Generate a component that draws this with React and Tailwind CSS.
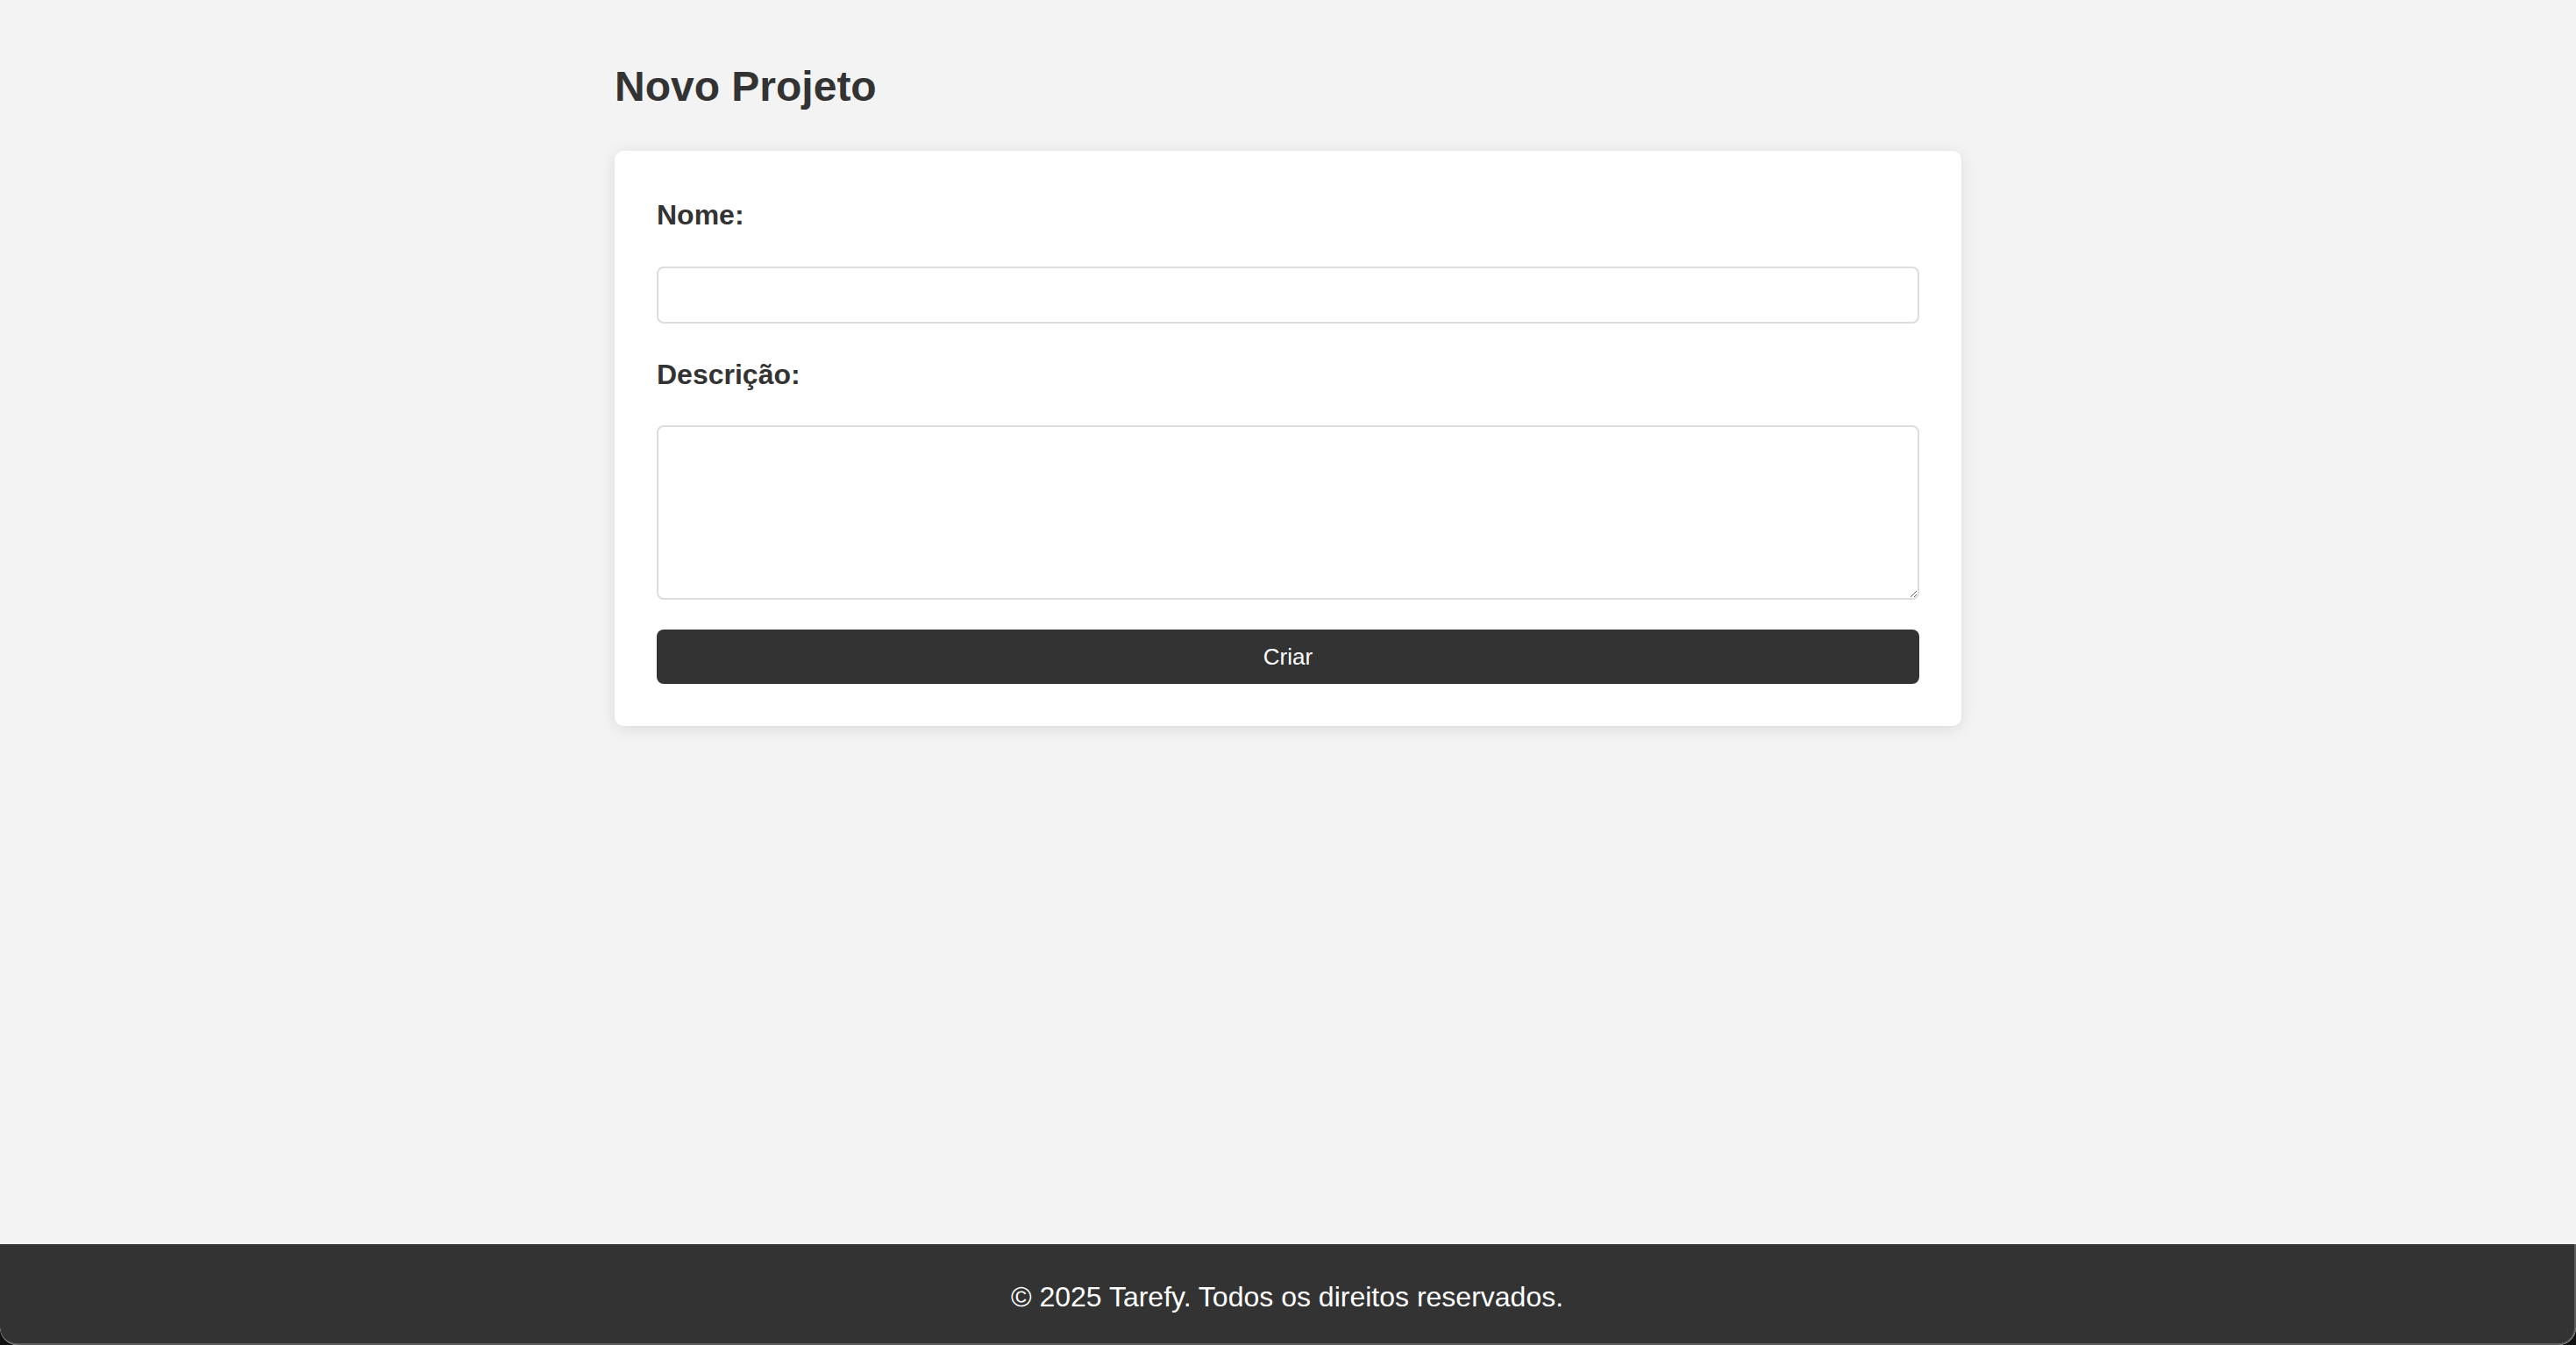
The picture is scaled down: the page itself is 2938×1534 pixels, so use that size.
export default function App() {
  return (
    <div className="bg-[#111] h-[1534px] w-full" style={{ fontFamily: '"Liberation Sans", Arial, sans-serif' }}>
      <div className="flex flex-col h-full bg-[#f3f3f3] rounded-b-[20px] overflow-hidden text-[#333]">
        <main className="flex-1">
          <div className="w-[1536px] mx-auto pt-[72px]">
            <h2 className="text-[48px] font-bold leading-[54px]">Novo Projeto</h2>

            <form className="mt-[46px] bg-white rounded-[10px] shadow-[0_3px_18px_rgba(0,0,0,0.1)] px-[48px] pt-[55px] pb-[48px] flex flex-col">
              <label className="text-[32px] font-bold leading-[36px]">Nome:</label>
              <input type="text" className="mt-[41px] h-[65px] w-full border-2 border-[#dddddd] rounded-[8px] px-4 outline-none" />

              <label className="mt-[40px] text-[32px] font-bold leading-[36px]">Descrição:</label>
              <textarea className="mt-[40px] h-[199px] w-full border-2 border-[#dddddd] rounded-[8px] px-4 py-2 outline-none" />

              <button type="button" className="mt-[34px] h-[62px] w-full bg-[#333] text-white text-[26px] rounded-[8px]">
                Criar
              </button>
            </form>
          </div>
        </main>

        <footer className="h-[115px] pt-[6px] bg-[#333] text-white text-[32px] flex items-center justify-center border-r-2 border-b-2 border-[#5e5e5e] rounded-b-[20px]">
          © 2025 Tarefy. Todos os direitos reservados.
        </footer>
      </div>
    </div>
  );
}
